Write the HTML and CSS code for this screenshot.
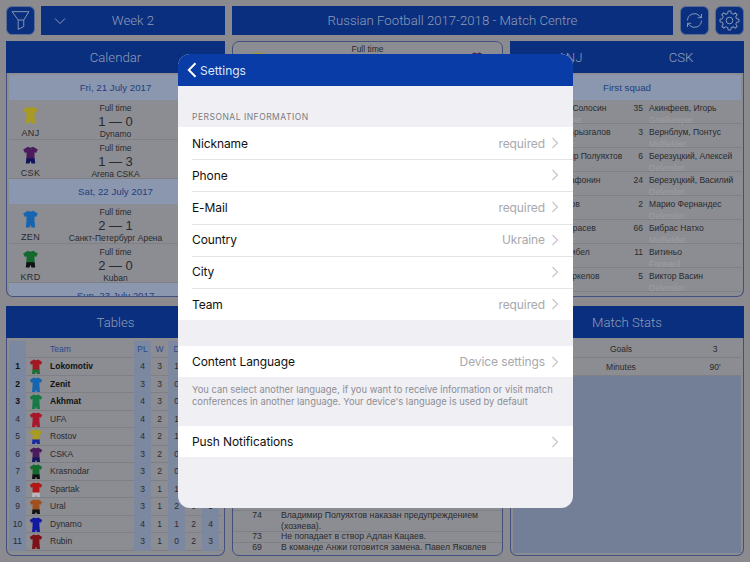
FILE: index.html
```html
<!DOCTYPE html>
<html lang="en">
<head>
  <meta charset="UTF-8">
  <meta name="viewport" content="width=device-width, initial-scale=1.0">
  <title>Russian Football 2017-2018 - Match Centre</title>
  <link rel="stylesheet" href="styles.css">
</head>
<body>
  <svg class="defs" width="0" height="0">
    <symbol id="kit" viewBox="0 0 16 20">
      <path class="kit-shorts" d="M3.6 12.5H12.4L13 18.6H9.1L8 15.6L6.9 18.6H3L3.6 12.5Z"/>
      <path class="kit-shirt" d="M5.2 0.6L8 1.6L10.8 0.6L15.8 3.6L14 7.2L12.3 6.4V13H3.7V6.4L2 7.2L0.2 3.6Z"/>
    </symbol>
    <symbol id="chev" viewBox="0 0 8 12">
      <path d="M1.5 1L6.5 6L1.5 11" fill="none" stroke="currentColor" stroke-width="1.1"/>
    </symbol>
    <path id="gear-seg" d="M10 3.95L10.47 1.11H13.53L14 3.95A8.3 8.3 0 0 1 16.27 4.89"/>
  </svg>

  <div class="app">
    <!-- top bar -->
    <div class="topbar">
      <div class="icon-btn">
        <svg viewBox="0 0 29 29"><path d="M5.5 5H23.5L18 14V21L12 24V14ZM12 14H18"/></svg>
      </div>
      <div class="bar week-bar">
        <svg class="week-chev" viewBox="0 0 12 8"><path d="M1 1.5L6 6.5L11 1.5"/></svg>
        <span>Week 2</span>
      </div>
      <div class="bar title-bar">Russian Football 2017-2018 - Match Centre</div>
      <div class="icon-btn">
        <svg viewBox="0 0 29 29">
          <path d="M7 14.5A7.5 7.5 0 0 1 20 9.5L22 11.5M22 7.5V11.5H18"/>
          <path d="M22 14.5A7.5 7.5 0 0 1 9 19.5L7 17.5M7 21.5V17.5H11"/>
        </svg>
      </div>
      <div class="icon-btn icon-gear">
        <svg viewBox="0 0 24 24">
          <use href="#gear-seg"/>
          <use href="#gear-seg" transform="rotate(45 12 12)"/>
          <use href="#gear-seg" transform="rotate(90 12 12)"/>
          <use href="#gear-seg" transform="rotate(135 12 12)"/>
          <use href="#gear-seg" transform="rotate(180 12 12)"/>
          <use href="#gear-seg" transform="rotate(225 12 12)"/>
          <use href="#gear-seg" transform="rotate(270 12 12)"/>
          <use href="#gear-seg" transform="rotate(315 12 12)"/>
          <circle cx="12" cy="12" r="3.8"/>
        </svg>
      </div>
    </div>

    <div class="panels">
      <!-- calendar -->
      <div class="panel">
        <div class="panel-head">Calendar</div>
        <div class="panel-body cal-body">
          <div class="band">Fri, 21 July 2017</div>
          <div class="match">
            <div class="team"><svg class="kit k-anj"><use href="#kit"/></svg>ANJ</div>
            <div class="match-info"><span>Full time</span><span class="score">1 — 0</span><span>Dynamo</span></div>
            <div class="team"><svg class="kit k-din"><use href="#kit"/></svg>DYN</div>
          </div>
          <div class="match">
            <div class="team"><svg class="kit k-csk"><use href="#kit"/></svg>CSK</div>
            <div class="match-info"><span>Full time</span><span class="score">1 — 3</span><span>Arena CSKA</span></div>
            <div class="team"><svg class="kit k-lok"><use href="#kit"/></svg>LOK</div>
          </div>
          <div class="band">Sat, 22 July 2017</div>
          <div class="match">
            <div class="team"><svg class="kit k-zen"><use href="#kit"/></svg>ZEN</div>
            <div class="match-info"><span>Full time</span><span class="score">2 — 1</span><span>Санкт-Петербург Арена</span></div>
            <div class="team"><svg class="kit k-spa"><use href="#kit"/></svg>SPA</div>
          </div>
          <div class="match">
            <div class="team"><svg class="kit k-krd"><use href="#kit"/></svg>KRD</div>
            <div class="match-info"><span>Full time</span><span class="score">2 — 0</span><span>Kuban</span></div>
            <div class="team"><svg class="kit k-ufa"><use href="#kit"/></svg>UFA</div>
          </div>
          <div class="band">Sun, 23 July 2017</div>
        </div>
      </div>

      <!-- match card -->
      <div class="panel panel-plain">
        <div class="panel-body score-card">
          <svg class="kit k-anj"><use href="#kit"/></svg>
          <span>Full time</span>
          <svg class="kit k-csk"><use href="#kit"/></svg>
        </div>
      </div>

      <!-- squads -->
      <div class="panel">
        <div class="panel-head head-split"><span>ANJ</span><span>CSK</span></div>
        <div class="panel-body">
          <div class="band">First squad</div>
          <div class="player"><span>1</span><div class="p-name">Евгений Солосин<small>Goalkeeper</small></div><span>35</span><div class="p-name">Акинфеев, Игорь<small>Goalkeeper</small></div></div>
          <div class="player"><span>8</span><div class="p-name">Сергей Брызгалов<small>Midfielder</small></div><span>3</span><div class="p-name">Вернблум, Понтус<small>Midfielder</small></div></div>
          <div class="player"><span>6</span><div class="p-name">Владимир Полуяхтов<small>Defender</small></div><span>6</span><div class="p-name">Березуцкий, Алексей<small>Defender</small></div></div>
          <div class="player"><span>4</span><div class="p-name">Ефим Сафонин<small>Defender</small></div><span>24</span><div class="p-name">Березуцкий, Василий<small>Defender</small></div></div>
          <div class="player"><span>5</span><div class="p-name">Лев Попов<small>Defender</small></div><span>2</span><div class="p-name">Марио Фернандес<small>Defender</small></div></div>
          <div class="player"><span>7</span><div class="p-name">Юрий Тарасев<small>Midfielder</small></div><span>66</span><div class="p-name">Бибрас Натхо<small>Midfielder</small></div></div>
          <div class="player"><span>9</span><div class="p-name">Арсен Цибел<small>Forward</small></div><span>11</span><div class="p-name">Витиньо<small>Forward</small></div></div>
          <div class="player"><span>3</span><div class="p-name">Иван Маркелов<small>Defender</small></div><span>5</span><div class="p-name">Виктор Васин<small>Defender</small></div></div>
        </div>
      </div>

      <!-- tables -->
      <div class="panel">
        <div class="panel-head">Tables</div>
        <div class="panel-body tbl-body">
          <div class="tbl-row tbl-head"><span class="c-rank"></span><span></span><span class="c-team">Team</span><span class="c-num">PL</span><span>W</span><span class="c-num">D</span><span>L</span><span class="c-num">Pts</span></div>
          <div class="tbl-row top3"><span class="c-rank">1</span><svg class="kit k-lok"><use href="#kit"/></svg><span class="c-team">Lokomotiv</span><span class="c-num">4</span><span>3</span><span class="c-num">1</span><span>0</span><span class="c-num">10</span></div>
          <div class="tbl-row top3"><span class="c-rank">2</span><svg class="kit k-zen"><use href="#kit"/></svg><span class="c-team">Zenit</span><span class="c-num">3</span><span>3</span><span class="c-num">0</span><span>0</span><span class="c-num">9</span></div>
          <div class="tbl-row top3"><span class="c-rank">3</span><svg class="kit k-akh"><use href="#kit"/></svg><span class="c-team">Akhmat</span><span class="c-num">4</span><span>3</span><span class="c-num">0</span><span>1</span><span class="c-num">9</span></div>
          <div class="tbl-row"><span class="c-rank">4</span><svg class="kit k-ufa"><use href="#kit"/></svg><span class="c-team">UFA</span><span class="c-num">4</span><span>2</span><span class="c-num">1</span><span>1</span><span class="c-num">7</span></div>
          <div class="tbl-row"><span class="c-rank">5</span><svg class="kit k-ros"><use href="#kit"/></svg><span class="c-team">Rostov</span><span class="c-num">4</span><span>2</span><span class="c-num">1</span><span>1</span><span class="c-num">7</span></div>
          <div class="tbl-row"><span class="c-rank">6</span><svg class="kit k-csk"><use href="#kit"/></svg><span class="c-team">CSKA</span><span class="c-num">3</span><span>2</span><span class="c-num">0</span><span>1</span><span class="c-num">6</span></div>
          <div class="tbl-row"><span class="c-rank">7</span><svg class="kit k-krd"><use href="#kit"/></svg><span class="c-team">Krasnodar</span><span class="c-num">3</span><span>2</span><span class="c-num">0</span><span>1</span><span class="c-num">6</span></div>
          <div class="tbl-row"><span class="c-rank">8</span><svg class="kit k-spa"><use href="#kit"/></svg><span class="c-team">Spartak</span><span class="c-num">3</span><span>1</span><span class="c-num">1</span><span>1</span><span class="c-num">4</span></div>
          <div class="tbl-row"><span class="c-rank">9</span><svg class="kit k-ura"><use href="#kit"/></svg><span class="c-team">Ural</span><span class="c-num">3</span><span>1</span><span class="c-num">2</span><span>0</span><span class="c-num">5</span></div>
          <div class="tbl-row"><span class="c-rank">10</span><svg class="kit k-din"><use href="#kit"/></svg><span class="c-team">Dynamo</span><span class="c-num">4</span><span>1</span><span class="c-num">1</span><span>2</span><span class="c-num">4</span></div>
          <div class="tbl-row"><span class="c-rank">11</span><svg class="kit k-rub"><use href="#kit"/></svg><span class="c-team">Rubin</span><span class="c-num">3</span><span>1</span><span class="c-num">0</span><span>2</span><span class="c-num">3</span></div>
        </div>
      </div>

      <!-- commentary -->
      <div class="panel panel-plain">
        <div class="panel-body log-body">
          <div class="log-row"><span>74</span><p>Владимир Полуяхтов наказан предупреждением (хозяева).</p></div>
          <div class="log-row"><span>73</span><p>Не попадает в створ Адлан Кацаев.</p></div>
          <div class="log-row"><span>69</span><p>В команде Анжи готовится замена. Павел Яковлев</p></div>
        </div>
      </div>

      <!-- match stats -->
      <div class="panel">
        <div class="panel-head">Match Stats</div>
        <div class="panel-body stats-body">
          <div class="stat-row"><span>1</span><span>Goals</span><span>3</span></div>
          <div class="stat-row"><span>90'</span><span>Minutes</span><span>90'</span></div>
          <div class="stats-fill"></div>
        </div>
      </div>
    </div>
  </div>

  <!-- settings sheet -->
  <div class="sheet">
    <div class="sheet-head">
      <svg class="back" viewBox="0 0 10 16"><path d="M8.5 1.2L1.8 8L8.5 14.8"/></svg>
      <span>Settings</span>
    </div>
    <div class="sheet-label">Personal Information</div>
    <div class="group">
      <div class="row"><span>Nickname</span><span class="val">required</span><svg class="chev"><use href="#chev"/></svg></div>
      <div class="row"><span>Phone</span><span class="val"></span><svg class="chev"><use href="#chev"/></svg></div>
      <div class="row"><span>E-Mail</span><span class="val">required</span><svg class="chev"><use href="#chev"/></svg></div>
      <div class="row"><span>Country</span><span class="val">Ukraine</span><svg class="chev"><use href="#chev"/></svg></div>
      <div class="row"><span>City</span><span class="val"></span><svg class="chev"><use href="#chev"/></svg></div>
      <div class="row"><span>Team</span><span class="val">required</span><svg class="chev"><use href="#chev"/></svg></div>
    </div>
    <div class="group group-lang">
      <div class="row row-single"><span>Content Language</span><span class="val">Device settings</span><svg class="chev"><use href="#chev"/></svg></div>
    </div>
    <p class="note">You can select another language, if you want to receive information or visit match conferences in another language. Your device's language is used by default</p>
    <div class="group">
      <div class="row row-single"><span>Push Notifications</span><span class="val"></span><svg class="chev"><use href="#chev"/></svg></div>
    </div>
  </div>
</body>
</html>
```

FILE: styles.css
```css
* {
  margin: 0;
  padding: 0;
  box-sizing: border-box;
}

body {
  width: 750px;
  height: 562px;
  overflow: hidden;
  position: relative;
  background: #8b8b8f;
  color: #2a2a2e;
  font-family: 'Liberation Sans', Arial, sans-serif;
  font-size: 8.5px;
}

.defs {
  position: absolute;
}

.app {
  padding: 6px;
}

/* top bar */
.topbar {
  display: flex;
  height: 29px;
  gap: 6px;
  margin-bottom: 6px;
}

.bar {
  background: #0a2f7e;
  color: #8e9cb8;
  font-family: Roboto, sans-serif;
  font-weight: 300;
  font-size: 13.2px;
  display: flex;
  align-items: center;
  justify-content: center;
}

.week-bar {
  width: 184px;
  position: relative;
}

.week-chev {
  position: absolute;
  left: 13px;
  top: 11px;
  width: 12px;
  height: 8px;
  fill: none;
  stroke: #8e9cb8;
}

.title-bar {
  flex: 1;
  margin: 0 1px;
}

.icon-btn {
  width: 29px;
  height: 29px;
  background: #0a2f7e;
  border: 1px solid #5a6c96;
  border-radius: 6px;
}

.icon-btn svg {
  display: block;
  width: 100%;
  height: 100%;
  fill: none;
  stroke: #8e9cb8;
  stroke-width: 1;
  stroke-linejoin: round;
}

.icon-gear svg {
  padding: 3px;
  stroke-width: 1.1;
}

/* panels */
.panels {
  display: grid;
  grid-template-columns: 219px 271px 234px;
  grid-template-rows: 256px 250px;
  column-gap: 7px;
  row-gap: 9px;
}

.panel {
  display: flex;
  flex-direction: column;
  overflow: hidden;
  min-height: 0;
}

.panel-head {
  height: 32px;
  flex: none;
  background: #0a2f7e;
  color: #8e9cb8;
  font-family: Roboto, sans-serif;
  font-weight: 300;
  font-size: 13.2px;
  display: flex;
  align-items: center;
  justify-content: center;
}

.head-split {
  padding: 0 7.5px 0 4.5px;
}

.head-split span {
  flex: 1;
  text-align: center;
}

.panel-body {
  flex: 1;
  min-height: 0;
  overflow: hidden;
  background: #8c8d92;
  border: 1px solid #41507f;
  border-top: none;
  border-radius: 0 0 7px 7px;
  padding: 2px;
}

.panel-plain .panel-body {
  border-top: 1px solid #41507f;
  border-radius: 7px;
}

.band {
  background: #8a97ae;
  color: #24407f;
  font-size: 9.7px;
  text-align: center;
  line-height: 25px;
  height: 25px;
}

/* calendar */
.match {
  display: grid;
  grid-template-columns: 43px 1fr 43px;
  height: 39.5px;
  border-bottom: 1px solid #7f8085;
}

.team {
  display: flex;
  flex-direction: column;
  align-items: center;
  font-size: 9px;
  padding-top: 6px;
  letter-spacing: 0.3px;
  line-height: 11px;
}

.team .kit {
  width: 15px;
  height: 19px;
  margin-bottom: 3px;
}

.match-info {
  display: flex;
  flex-direction: column;
  align-items: center;
  padding-top: 3px;
  line-height: 11px;
}

.score {
  font-size: 13px;
  line-height: 15px;
}

/* kits */
.kit-shirt {
  fill: var(--shirt);
}

.kit-shorts {
  fill: var(--shorts);
}

.k-anj { --shirt: #a89a22; --shorts: #a89a22; }
.k-csk { --shirt: #4a1c5e; --shorts: #14145e; }
.k-zen { --shirt: #1565b0; --shorts: #1565b0; }
.k-krd { --shirt: #14692f; --shorts: #111; }
.k-lok { --shirt: #a01a22; --shorts: #1d6e35; }
.k-akh { --shirt: #157a45; --shorts: #157a45; }
.k-ufa { --shirt: #a8162a; --shorts: #a8162a; }
.k-ros { --shirt: #a89a22; --shorts: #1529a0; }
.k-spa { --shirt: #b01818; --shorts: #b9b9bd; }
.k-ura { --shirt: #a0501c; --shorts: #111; }
.k-din { --shirt: #1219a0; --shorts: #1219a0; }
.k-rub { --shirt: #7c1218; --shorts: #7c1218; }

/* score card */
.score-card {
  display: flex;
  justify-content: space-between;
  padding: 10px 17px 0;
  text-align: center;
}

.score-card span {
  line-height: 1;
  margin-top: -7px;
}

.score-card .kit {
  width: 16px;
  height: 20px;
}

/* squads */
.player {
  display: grid;
  grid-template-columns: 19px 85px 14px 1fr;
  column-gap: 6px;
  height: 24px;
  border-bottom: 1px solid #7f8085;
  line-height: 12px;
  padding-top: 2px;
  white-space: nowrap;
}

.player > span {
  text-align: right;
}

.p-name small {
  display: block;
  font-size: 8.5px;
  color: #9c9da2;
}

/* tables */
.tbl-body {
  padding-top: 2.5px;
}

.tbl-row {
  display: grid;
  grid-template-columns: 17px 24px 84px repeat(5, 17px);
  height: 17.5px;
  line-height: 17.5px;
  text-align: center;
  border-bottom: 1px solid #7f8085;
}

.tbl-row .kit {
  width: 14px;
  height: 16px;
  margin: 1px 0 0 3px;
}

.c-rank,
.c-num {
  background: #7b88a0;
}

.c-team {
  text-align: left;
}

.tbl-head {
  color: #274a90;
}

.top3 .c-team,
.top3 .c-rank {
  font-weight: bold;
  color: #111;
}

/* commentary */
.log-body {
  display: flex;
  flex-direction: column;
  justify-content: flex-end;
  padding: 0 0 3px;
}

.log-row {
  display: grid;
  grid-template-columns: 48px 1fr;
  box-shadow: inset 0 1px 0 #7f8085;
  line-height: 10.5px;
  font-size: 8.7px;
}

.log-row span {
  text-align: center;
}

/* match stats */
.stats-body {
  display: flex;
  flex-direction: column;
}

.stat-row {
  display: grid;
  grid-template-columns: 60px 96px 1fr;
  text-align: center;
  height: 18px;
  line-height: 18px;
  border-bottom: 1px solid #7f8085;
}

.stat-row span:last-child {
  padding-left: 20px;
}

.stats-fill {
  flex: 1;
  background: #727f96;
}

/* settings sheet */
.sheet {
  position: absolute;
  left: 178px;
  top: 54px;
  width: 395px;
  height: 454px;
  background: #efeff4;
  border-radius: 12px;
  overflow: hidden;
  font-family: Inter, 'Noto Sans', sans-serif;
  color: #111;
}

.sheet-head {
  height: 32px;
  background: #0a3ca8;
  color: #dfe6f5;
  font-size: 12px;
  display: flex;
  align-items: center;
  gap: 3px;
  padding-left: 9px;
}

.back {
  width: 10px;
  height: 16px;
  fill: none;
  stroke: #fff;
  stroke-width: 2;
}

.sheet-label {
  font-size: 8.5px;
  letter-spacing: 0.5px;
  text-transform: uppercase;
  color: #7b7b80;
  padding: 26px 0 4px 14px;
  line-height: 11px;
}

.group {
  background: #fff;
}

.row {
  display: flex;
  align-items: center;
  height: 32.2px;
  font-size: 12px;
  letter-spacing: -0.1px;
  padding: 0 14px;
  position: relative;
}

.row-single {
  height: 31px;
}

.row + .row::before {
  content: '';
  position: absolute;
  left: 14px;
  right: 0;
  top: 0;
  height: 1px;
  background: #e4e4e6;
}

.val {
  margin-left: auto;
  color: #a8a8ad;
}

.chev {
  width: 8px;
  height: 12px;
  margin-left: 6px;
  color: #c4c4c9;
}

.group-lang {
  margin-top: 26px;
}

.note {
  height: 49px;
  padding: 7px 14px 0;
  font-size: 9.4px;
  line-height: 11.6px;
  color: #8e8e93;
}
```
